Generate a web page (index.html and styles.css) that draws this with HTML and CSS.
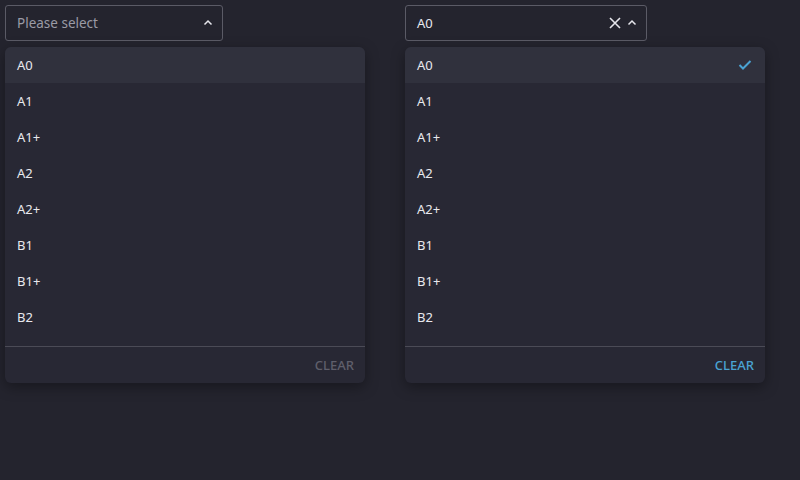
FILE: index.html
```html
<!DOCTYPE html>
<html>
<head>
<meta charset="utf-8">
<link rel="stylesheet" href="styles.css">
</head>
<body>
<div class="page">
  <div class="col">
    <div class="select w-left">
      <span class="placeholder">Please select</span>
      <span class="icons">
        <svg class="chev" width="12" height="12" viewBox="0 0 12 12"><path d="M2.5 7.5 L6 4 L9.5 7.5" fill="none" stroke="#e6e6ec" stroke-width="1.5"/></svg>
      </span>
    </div>
    <div class="panel">
      <div class="list">
        <div class="item active">A0</div>
        <div class="item">A1</div>
        <div class="item">A1+</div>
        <div class="item">A2</div>
        <div class="item">A2+</div>
        <div class="item">B1</div>
        <div class="item">B1+</div>
        <div class="item">B2</div>
      </div>
      <div class="footer"><span class="clear disabled">CLEAR</span></div>
    </div>
  </div>
  <div class="col">
    <div class="select w-right">
      <span class="value">A0</span>
      <span class="icons">
        <svg class="x" width="14" height="14" viewBox="0 0 14 14"><path d="M2 2 L12 12 M12 2 L2 12" fill="none" stroke="#e6e6ec" stroke-width="1.6"/></svg>
        <svg class="chev" width="12" height="12" viewBox="0 0 12 12"><path d="M2.5 7.5 L6 4 L9.5 7.5" fill="none" stroke="#e6e6ec" stroke-width="1.5"/></svg>
      </span>
    </div>
    <div class="panel">
      <div class="list">
        <div class="item active">A0
          <svg class="check" width="14" height="14" viewBox="0 0 14 14"><path d="M1.5 7 L5 10.5 L12.5 3" fill="none" stroke="#4aa3d3" stroke-width="2"/></svg>
        </div>
        <div class="item">A1</div>
        <div class="item">A1+</div>
        <div class="item">A2</div>
        <div class="item">A2+</div>
        <div class="item">B1</div>
        <div class="item">B1+</div>
        <div class="item">B2</div>
      </div>
      <div class="footer"><span class="clear">CLEAR</span></div>
    </div>
  </div>
</div>
</body>
</html>
```
FILE: styles.css
```css
html, body {
  margin: 0;
  padding: 0;
  background: #24242e;
  width: 800px;
  height: 480px;
  overflow: hidden;
  font-family: "Noto Sans", "Open Sans", sans-serif;
  font-size: 13px;
  color: #e8e8ee;
}
.page {
  display: flex;
  gap: 40px;
  padding: 5px;
}
.col {
  width: 360px;
  display: flex;
  flex-direction: column;
  gap: 6px;
}
.select {
  box-sizing: border-box;
  height: 36px;
  border: 1px solid #5b5b66;
  border-radius: 3px;
  display: flex;
  align-items: center;
  justify-content: space-between;
  padding: 0 8px 0 11px;
}
.w-left { width: 218px; }
.w-right { width: 242px; }
.placeholder { color: #9b9ba6; font-size: 13.5px; }
.value { color: #e8e8ee; }
.icons {
  display: flex;
  align-items: center;
  gap: 4px;
}
.icons svg { display: block; }
.panel {
  background: #282834;
  border-radius: 6px;
  box-shadow: 0 4px 14px rgba(0,0,0,0.35);
  overflow: hidden;
}
.list {
  padding-bottom: 11px;
}
.item {
  height: 36px;
  display: flex;
  align-items: center;
  justify-content: space-between;
  padding: 0 13px 0 12px;
}
.item.active { background: #30313d; }
.check { display: block; }
.footer {
  border-top: 1px solid #4b4b56;
  height: 36px;
  display: flex;
  align-items: center;
  justify-content: flex-end;
  padding: 0 11px;
}
.clear {
  font-weight: 500;
  font-size: 13px;
  color: #4aa3d3;
}
.clear.disabled { color: #5f5f6b; }
```
